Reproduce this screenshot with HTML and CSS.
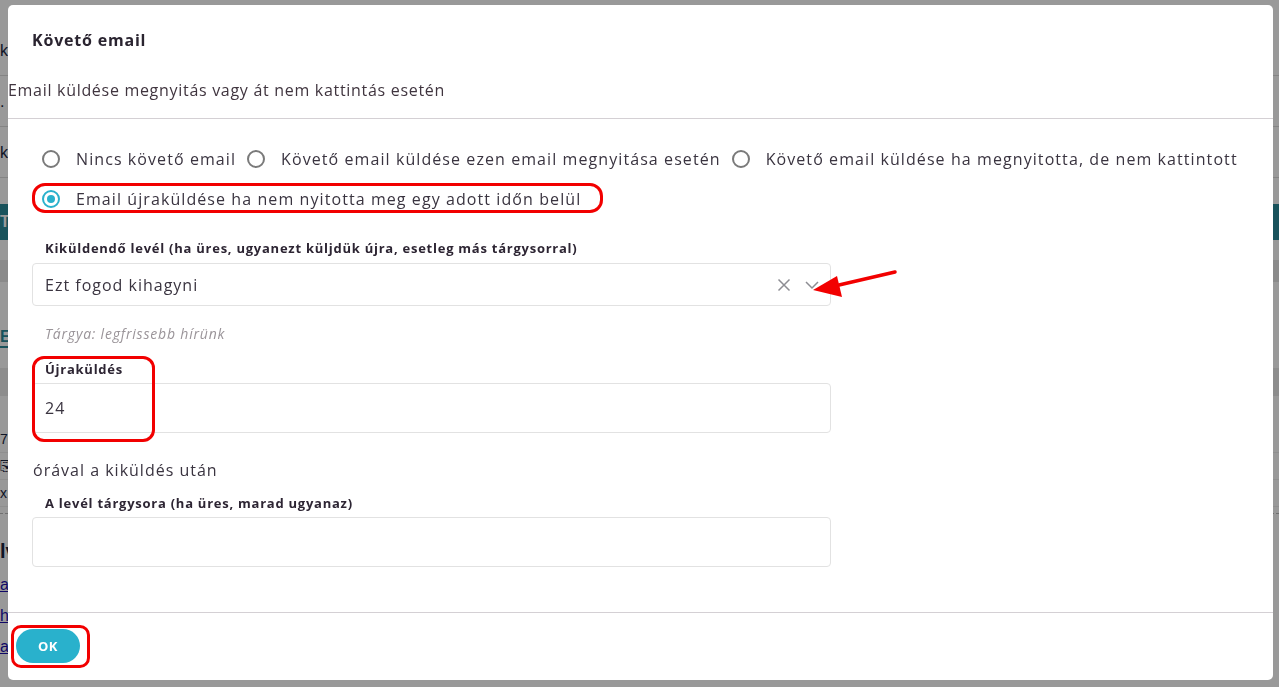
FILE: index.html
```html
<!DOCTYPE html>
<html lang="hu">
<head>
<meta charset="utf-8">
<title>Követő email</title>
<link rel="stylesheet" href="styles.css">
</head>
<body>
<div class="page">
  <div class="bg-row line">k</div>
  <div class="bg-row line">.</div>
  <div class="bg-row line">k</div>
  <div class="bg-band">T</div>
  <div class="bg-gray"></div>
  <div class="bg-link">E</div>
  <div class="bg-gray2"></div>
  <div class="bg-small">7</div>
  <div class="bg-small">⎘</div>
  <div class="bg-small">x</div>
  <div class="bg-dash"></div>
  <div class="bg-bold">lv</div>
  <div class="bg-a"><a href="#">a</a></div>
  <div class="bg-a"><a href="#">h</a></div>
  <div class="bg-a"><a href="#">a</a></div>
</div>
<div class="overlay"></div>

<div class="modal">
  <div class="modal-header">
    <h2 class="modal-title">Követő email</h2>
    <p class="modal-desc">Email küldése megnyitás vagy át nem kattintás esetén</p>
  </div>
  <div class="modal-body">
    <div class="radios">
      <label class="radio"><span class="circle"></span><span>Nincs követő email</span></label>
      <label class="radio"><span class="circle"></span><span>Követő email küldése ezen email megnyitása esetén</span></label>
      <label class="radio"><span class="circle"></span><span>Követő email küldése ha megnyitotta, de nem kattintott</span></label>
      <label class="radio checked annotated"><span class="circle"></span><span>Email újraküldése ha nem nyitotta meg egy adott időn belül</span></label>
    </div>

    <div class="field">
      <div class="field-label">Kiküldendő levél (ha üres, ugyanezt küljdük újra, esetleg más tárgysorral)</div>
      <div class="select">
        <span class="select-value">Ezt fogod kihagyni</span>
        <span class="select-icons">
          <svg width="16" height="16" viewBox="0 0 16 16"><path d="M2.5 2.5 L13.5 13.5 M13.5 2.5 L2.5 13.5" stroke="#8d8d93" stroke-width="1.5" fill="none"/></svg>
          <svg width="16" height="16" viewBox="0 0 16 16"><path d="M2 5 L8 11 L14 5" stroke="#8d8d93" stroke-width="1.5" fill="none"/></svg>
        </span>
      </div>
      <div class="hint">Tárgya: legfrissebb hírünk</div>
    </div>

    <div class="field field-resend">
      <div class="field-label">Újraküldés</div>
      <div class="input">24</div>
      <div class="annot-box"></div>
    </div>

    <div class="after-text">órával a kiküldés után</div>

    <div class="field field-subject">
      <div class="field-label">A levél tárgysora (ha üres, marad ugyanaz)</div>
      <div class="input"></div>
    </div>
  </div>
  <div class="modal-footer">
    <span class="annot-btn"><button class="btn-ok">OK</button></span>
  </div>

  <svg class="arrow" width="100" height="40" viewBox="0 0 100 40">
    <path d="M84 9 L28 22" stroke="#f20000" stroke-width="3.5" fill="none" stroke-linecap="round"/>
    <path d="M2 27 L26 13 L31 34 Z" fill="#f20000"/>
  </svg>
</div>
</body>
</html>
```

FILE: styles.css
```css
* { box-sizing: border-box; }

html, body {
  margin: 0;
  height: 100%;
  overflow: hidden;
}

body {
  font-family: "Open Sans", "DejaVu Sans", sans-serif;
  background: #fff;
}

.page {
  padding-top: 25px;
  font-family: "Liberation Sans", sans-serif;
  font-size: 16px;
  color: #1a2540;
}

.bg-row {
  height: 51px;
  line-height: 51px;
  border-bottom: 1px solid #ddd;
}

.bg-band {
  margin-top: 26px;
  height: 36px;
  line-height: 36px;
  background: #2a8a9a;
  color: #fff;
  font-weight: bold;
}

.bg-gray {
  margin-top: 20px;
  height: 22px;
  background: #e6e6e6;
}

.bg-link {
  margin-top: 46px;
  color: #2a8a9a;
  font-weight: bold;
  border-bottom: 2px solid #2a8a9a;
  width: 12px;
}

.bg-gray2 {
  margin-top: 20px;
  height: 28px;
  background: #ececec;
}

.bg-small {
  height: 27px;
  line-height: 27px;
  font-size: 14px;
  border-bottom: 1px solid #eee;
}

.bg-gray2 + .bg-small { margin-top: 30px; }

.bg-dash {
  border-top: 1px dashed #bbb;
  margin-top: 6px;
  height: 20px;
}

.bg-bold {
  font-weight: bold;
  font-size: 20px;
  height: 36px;
  line-height: 36px;
}

.bg-a {
  height: 31px;
  line-height: 31px;
}
.bg-a a { color: #1a0dab; }

.overlay {
  position: fixed;
  inset: 0;
  background: rgba(0, 0, 0, 0.4);
}

.modal {
  position: fixed;
  top: 5px;
  left: 8px;
  width: 1265px;
  height: 675px;
  background: #fff;
  border-radius: 5px;
  color: #3b3340;
  display: flex;
  flex-direction: column;
}

.modal-header {
  border-bottom: 1px solid #d4d0d4;
}

.modal-title {
  margin: 0;
  padding: 23px 24px 0;
  font-size: 16px;
  line-height: 24px;
  font-weight: 700;
  letter-spacing: 0.8px;
  color: #2a2430;
}

.modal-desc {
  margin: 27px 0 0;
  padding: 0 0 17px;
  font-size: 16px;
  line-height: 22px;
  letter-spacing: 0.7px;
  color: #40353f;
}

.modal-body {
  flex: 1;
  padding: 20px 24px 0;
}

.radios {
  display: flex;
  flex-wrap: wrap;
  column-gap: 11px;
  padding-left: 10px;
  margin-bottom: 20px;
}

.radio {
  display: flex;
  align-items: center;
  gap: 16px;
  height: 40px;
  font-size: 16px;
  letter-spacing: 1.08px;
  color: #3a3440;
  position: relative;
}

.circle {
  width: 18px;
  height: 18px;
  border: 2px solid #7a7a7a;
  border-radius: 50%;
  flex: none;
  position: relative;
}

.radio.checked .circle {
  border-color: #29b1cc;
}

.radio.checked .circle::after {
  content: "";
  position: absolute;
  inset: 3px;
  border-radius: 50%;
  background: #29b1cc;
}

.annotated::before {
  content: "";
  position: absolute;
  left: -10px;
  right: -22px;
  top: 4px;
  bottom: 6px;
  border: 3px solid #f20000;
  border-radius: 13px;
}

.field {
  position: relative;
}

.field-label {
  font-size: 13px;
  line-height: 18px;
  font-weight: 700;
  color: #2d2533;
  padding-left: 13px;
  letter-spacing: 0.75px;
}

.select {
  margin-top: 6px;
  width: 799px;
  height: 43px;
  border: 1px solid #e2e2e2;
  border-radius: 4px;
  display: flex;
  align-items: center;
  justify-content: space-between;
  padding: 0 10px 0 12px;
  font-size: 16px;
  letter-spacing: 1px;
  color: #3a3440;
}

.select-icons {
  display: flex;
  gap: 12px;
  align-items: center;
}

.hint {
  margin-top: 19px;
  padding-left: 13px;
  font-size: 14px;
  line-height: 18px;
  font-style: italic;
  letter-spacing: 0.8px;
  color: #9a9499;
}

.field-resend {
  margin-top: 17px;
}

.input {
  margin-top: 5px;
  width: 799px;
  height: 50px;
  border: 1px solid #e2e2e2;
  border-radius: 4px;
  padding: 0 12px;
  display: flex;
  align-items: center;
  font-size: 16px;
  letter-spacing: 1px;
  color: #3a3440;
}

.annot-box {
  position: absolute;
  left: 0;
  top: -4px;
  width: 123px;
  height: 86px;
  border: 3px solid #f20000;
  border-radius: 12px;
}

.after-text {
  margin-top: 26px;
  padding-left: 1px;
  font-size: 16px;
  line-height: 22px;
  letter-spacing: 1px;
  color: #3a3440;
}

.field-subject {
  margin-top: 13px;
}

.modal-footer {
  border-top: 1px solid #d4d0d4;
  padding: 12px 3px 12px;
}

.annot-btn {
  display: inline-block;
  vertical-align: top;
  border: 3px solid #f20000;
  border-radius: 10px;
  padding: 1px 7px 2px 2px;
}

.btn-ok {
  display: block;
  width: 64px;
  height: 34px;
  border: none;
  border-radius: 17px;
  background: #29b1cc;
  color: #fff;
  font-family: inherit;
  font-weight: 700;
  font-size: 13px;
  letter-spacing: 0.5px;
}

.arrow {
  position: absolute;
  left: 803px;
  top: 258px;
}
```
